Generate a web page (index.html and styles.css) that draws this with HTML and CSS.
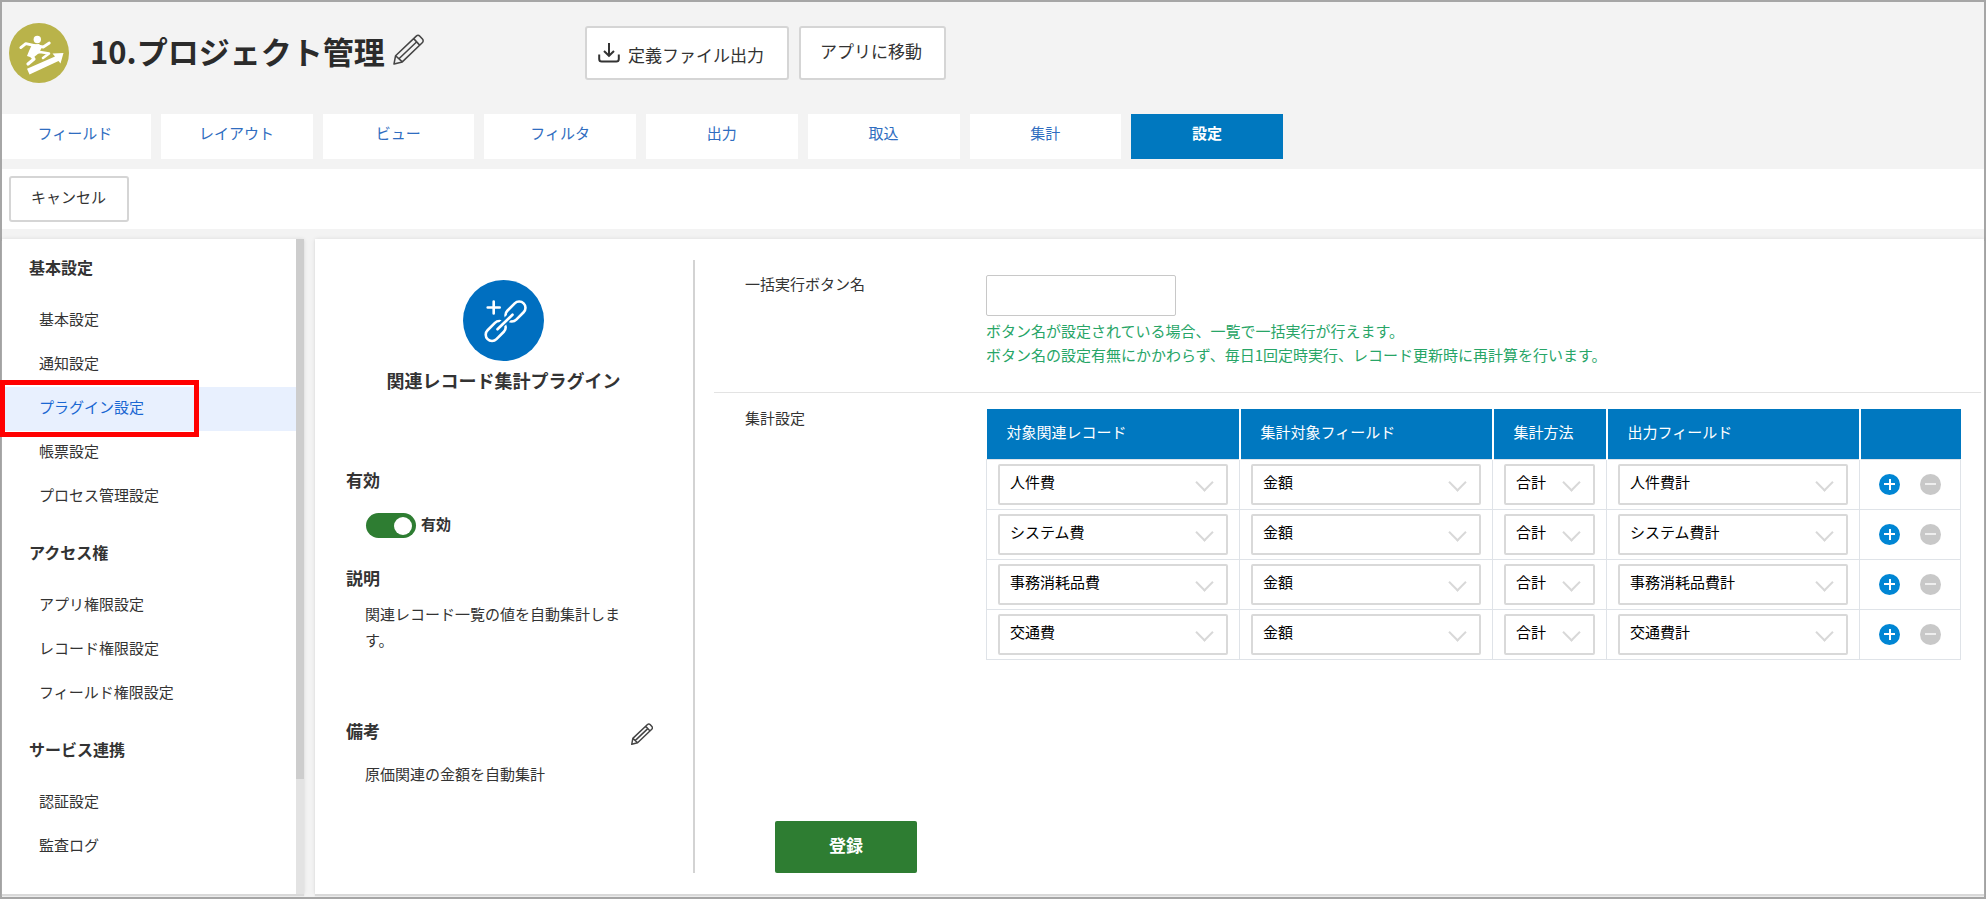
FILE: index.html
```html
<!DOCTYPE html>
<html lang="ja">
  <head>
    <meta charset="utf-8" />
    <title>10.プロジェクト管理</title>
    <link rel="stylesheet" href="styles.css">
  </head>

  <body>
    <div class="page">
      <header class="header">
        <svg class="app-icon" viewBox="0 0 60 60" aria-hidden="true">
          <circle cx="30" cy="30" r="30" fill="#b9b34a" />
          <circle cx="28.3" cy="16.5" r="3.7" fill="#fff" />
          <path d="M23 21.5l7-.5 3 3-3 6-6 5-6-2 2-5z" fill="#fff" />
          <path d="M11.8 24.6l5-4 9 2 8.5 1.4 6-4" fill="none" stroke="#fff" stroke-width="2.8" stroke-linecap="round" stroke-linejoin="round" />
          <path d="M22 30.500l9-1.500 9 1.500-6 4.500" fill="none" stroke="#fff" stroke-width="2.600" stroke-linecap="round" stroke-linejoin="round" />
          <path d="M21 31l4 5-6 5" fill="none" stroke="#fff" stroke-width="3.200" stroke-linecap="round" stroke-linejoin="round" />
          <path d="M18 45.800L46 33.400l-2.500-3L54.500 30l-3 10.500-2-2.500L20.500 51.500z" fill="#fff" />
        </svg>

        <div class="app-title">
          <h1>10.プロジェクト管理</h1>
          <button type="button" class="icon-button" aria-label="名称を編集">
            <svg class="pencil-large" viewBox="0 0 30 30">
              <path d="M1 29l1.500-8L22.500 2a2.500 2.500 0 0 1 3.500.2l2.500 2.700a2.500 2.500 0 0 1-.2 3.600L9 27zM2.500 21L9 27M20 4.500l6 6.500M6 23.700L22.500 8" />
            </svg>
          </button>
        </div>

        <div class="header-buttons">
          <button type="button" class="button export">
            <svg class="download" viewBox="0 0 22 20">
              <path d="M1.200 11.500v4.500a2.500 2.500 0 0 0 2.500 2.500h14.600a2.500 2.500 0 0 0 2.500-2.500v-4.500M11 0v12.500M6 8l5 4.800L16 8" />
            </svg>
            <span>定義ファイル出力</span>
          </button>
          <button type="button" class="button move">アプリに移動</button>
        </div>
      </header>

      <nav class="tabs-wrap">
        <div class="tabs">
          <a href="#">フィールド</a>
          <a href="#">レイアウト</a>
          <a href="#">ビュー</a>
          <a href="#">フィルタ</a>
          <a href="#">出力</a>
          <a href="#">取込</a>
          <a href="#">集計</a>
          <a href="#" class="active">設定</a>
        </div>
      </nav>

      <div class="toolbar">
        <button type="button" class="button cancel">キャンセル</button>
      </div>

      <div class="content">
        <aside class="sidebar">
          <nav class="menu">
            <section>
              <h2>基本設定</h2>
              <a href="#">基本設定</a>
              <a href="#">通知設定</a>
              <a href="#" class="selected">プラグイン設定</a>
              <a href="#">帳票設定</a>
              <a href="#">プロセス管理設定</a>
            </section>
            <section>
              <h2>アクセス権</h2>
              <a href="#">アプリ権限設定</a>
              <a href="#">レコード権限設定</a>
              <a href="#">フィールド権限設定</a>
            </section>
            <section>
              <h2>サービス連携</h2>
              <a href="#">認証設定</a>
              <a href="#">監査ログ</a>
            </section>
          </nav>
          <div class="scrollbar"><div class="thumb"></div></div>
        </aside>

        <main class="card">
          <section class="plugin">
            <div class="plugin-head">
              <svg class="plugin-icon" viewBox="0 0 81 81" aria-hidden="true">
                <circle cx="40.500" cy="40.500" r="40.500" fill="#006fc0" />
                <g fill="none" stroke="#fff" stroke-width="2.600" stroke-linecap="round">
                  <path d="M30.700 21.500v12M24.700 27.500h12" />
                  <rect x="-11.500" y="-6.300" width="23" height="12.600" rx="6.300" transform="translate(52.500 31.500) rotate(-45)" />
                  <rect x="-11.500" y="-6.300" width="23" height="12.600" rx="6.300" transform="translate(32.700 51) rotate(-45)" />
                  <path d="M37.500 45.500l9-8.500" stroke="#006fc0" stroke-width="6.500" />
                  <path d="M34.500 49.300l15-14.600" />
                </g>
              </svg>
              <p class="plugin-name">関連レコード集計プラグイン</p>
            </div>

            <h3>有効</h3>
            <label class="switch">
              <input type="checkbox" checked>
              <span>有効</span>
            </label>

            <h3>説明</h3>
            <p class="description">関連レコード一覧の値を自動集計します。</p>

            <div class="memo-head">
              <h3>備考</h3>
              <button type="button" class="icon-button" aria-label="備考を編集">
                <svg class="pencil-small" viewBox="0 0 30 30">
                  <path d="M1 29l1.500-8L22.500 2a2.500 2.500 0 0 1 3.500.2l2.500 2.700a2.500 2.500 0 0 1-.2 3.600L9 27zM2.500 21L9 27M20 4.500l6 6.500M6 23.700L22.500 8" />
                </svg>
              </button>
            </div>
            <p class="memo">原価関連の金額を自動集計</p>
          </section>

          <form class="settings">
            <div class="form-row">
              <label class="form-label" for="buttonName">一括実行ボタン名</label>
              <div class="form-field">
                <input type="text" id="buttonName" class="text-input">
                <p class="help">ボタン名が設定されている場合、一覧で一括実行が行えます。<br>ボタン名の設定有無にかかわらず、毎日1回定時実行、レコード更新時に再計算を行います。</p>
              </div>
            </div>

            <div class="form-row">
              <div class="form-label">集計設定</div>
              <div class="form-field">
                <table>
                  <colgroup>
                    <col>
                    <col>
                    <col class="col-method">
                    <col>
                    <col class="col-actions">
                  </colgroup>
                  <thead>
                    <tr>
                      <th>対象関連レコード</th>
                      <th>集計対象フィールド</th>
                      <th>集計方法</th>
                      <th>出力フィールド</th>
                      <th></th>
                    </tr>
                  </thead>
                  <tbody>
                    <tr>
                      <td><div class="select"><select aria-label="対象関連レコード"><option>人件費</option></select></div></td>
                      <td><div class="select"><select aria-label="集計対象フィールド"><option>金額</option></select></div></td>
                      <td><div class="select"><select aria-label="集計方法"><option>合計</option></select></div></td>
                      <td><div class="select"><select aria-label="出力フィールド"><option>人件費計</option></select></div></td>
                      <td>
                        <div class="actions">
                          <button type="button" class="round add" aria-label="行を追加"></button>
                          <button type="button" class="round remove" aria-label="行を削除"></button>
                        </div>
                      </td>
                    </tr>
                    <tr>
                      <td><div class="select"><select aria-label="対象関連レコード"><option>システム費</option></select></div></td>
                      <td><div class="select"><select aria-label="集計対象フィールド"><option>金額</option></select></div></td>
                      <td><div class="select"><select aria-label="集計方法"><option>合計</option></select></div></td>
                      <td><div class="select"><select aria-label="出力フィールド"><option>システム費計</option></select></div></td>
                      <td>
                        <div class="actions">
                          <button type="button" class="round add" aria-label="行を追加"></button>
                          <button type="button" class="round remove" aria-label="行を削除"></button>
                        </div>
                      </td>
                    </tr>
                    <tr>
                      <td><div class="select"><select aria-label="対象関連レコード"><option>事務消耗品費</option></select></div></td>
                      <td><div class="select"><select aria-label="集計対象フィールド"><option>金額</option></select></div></td>
                      <td><div class="select"><select aria-label="集計方法"><option>合計</option></select></div></td>
                      <td><div class="select"><select aria-label="出力フィールド"><option>事務消耗品費計</option></select></div></td>
                      <td>
                        <div class="actions">
                          <button type="button" class="round add" aria-label="行を追加"></button>
                          <button type="button" class="round remove" aria-label="行を削除"></button>
                        </div>
                      </td>
                    </tr>
                    <tr>
                      <td><div class="select"><select aria-label="対象関連レコード"><option>交通費</option></select></div></td>
                      <td><div class="select"><select aria-label="集計対象フィールド"><option>金額</option></select></div></td>
                      <td><div class="select"><select aria-label="集計方法"><option>合計</option></select></div></td>
                      <td><div class="select"><select aria-label="出力フィールド"><option>交通費計</option></select></div></td>
                      <td>
                        <div class="actions">
                          <button type="button" class="round add" aria-label="行を追加"></button>
                          <button type="button" class="round remove" aria-label="行を削除"></button>
                        </div>
                      </td>
                    </tr>
                  </tbody>
                </table>
              </div>
            </div>

            <button type="button" class="submit">登録</button>
          </form>
        </main>
      </div>
    </div>
  </body>
</html>
```

FILE: styles.css
```css
*, *::before, *::after {
  box-sizing: border-box;
}

body {
  margin: 0;
  font-family: "Noto Sans CJK JP", sans-serif;
  font-size: 15px;
  line-height: 24px;
  color: #333;
}

h1, h2, h3, p {
  margin: 0;
}

a {
  text-decoration: none;
}

button, input, select {
  font-family: inherit;
  font-size: 15px;
}

.page {
  display: flex;
  flex-direction: column;
  min-height: 100vh;
  border: 2px solid #a6a6a6;
  background-color: #f3f3f3;
}

/* header */

.header {
  display: flex;
  align-items: center;
  padding: 21px 7px 31px;
}

.app-icon {
  width: 60px;
  height: 60px;
  margin-right: 21px;
}

.app-title {
  display: flex;
  align-items: center;
  gap: 8px;
  flex: 0 0 495px;
  padding-bottom: 4px;
}

h1 {
  font-size: 31px;
  line-height: 44px;
  color: #2b2b2b;
}

.icon-button {
  display: flex;
  padding: 0;
  border: none;
  background: none;
}

.pencil-large {
  width: 31px;
  height: 31px;
  margin-bottom: 4px;
  fill: none;
  stroke: #444;
  stroke-width: 1.5;
  stroke-linejoin: round;
}

.header-buttons {
  display: flex;
  gap: 10px;
}

.button {
  border: 2px solid #d5d5d5;
  border-radius: 3px;
  background-color: white;
  color: #333;
}

.header-buttons .button {
  height: 54px;
  font-size: 17px;
}

.export {
  display: flex;
  align-items: center;
  gap: 8px;
  padding: 3px 23px 0 11px;
}

.move {
  padding: 0 22px 5px 19px;
}

.download {
  width: 22px;
  height: 20px;
  margin-bottom: 4px;
  fill: none;
  stroke: #333;
  stroke-width: 2;
}

/* tabs */

.tabs-wrap {
  overflow: hidden;
}

.tabs {
  display: grid;
  grid-template-columns: repeat(8, 1fr);
  gap: 10px;
  width: 1284px;
  margin-left: -3px;
}

.tabs a {
  height: 45px;
  padding-top: 7px;
  background-color: white;
  color: #2f6dc0;
  text-align: center;
}

.tabs .active {
  background-color: #0078bf;
  color: white;
  font-weight: bold;
}

.toolbar {
  margin: 10px 0;
  padding: 7px;
  background-color: white;
}

.cancel {
  display: block;
  height: 46px;
  padding: 0 21px 6px 20px;
}

/* content */

.content {
  display: flex;
  flex: 1;
  gap: 11px;
  padding-bottom: 3px;
}

.sidebar {
  display: flex;
  flex: 0 0 302px;
  background-color: white;
  box-shadow: 0 2px 1px #d9d9d9, 0 0 4px rgba(0, 0, 0, 0.1);
}

.menu {
  display: flex;
  flex-direction: column;
  flex: 1;
  gap: 5px;
}

.menu h2 {
  padding: 0 0 3px 27px;
  font-size: 16px;
  line-height: 57px;
}

.menu a {
  display: block;
  padding: 0 0 4px 37px;
  line-height: 40px;
  color: #333;
}

.menu .selected {
  position: relative;
  background-color: #e8f0fe;
  color: #1a67d2;
}

/* red frame round the selected entry */
.menu .selected::after {
  content: "";
  position: absolute;
  left: -2px;
  top: -7px;
  width: 199px;
  height: 57px;
  border: 5px solid #f00;
}

.scrollbar {
  width: 8px;
  background-color: #e3e3e3;
}

.thumb {
  height: 540px;
  background-color: #cdcdcd;
}

.card {
  display: flex;
  flex: 1;
  padding: 21px 0;
  background-color: white;
  box-shadow: 0 2px 1px #d9d9d9, 0 0 4px rgba(0, 0, 0, 0.1);
}

/* plugin column */

.plugin {
  flex: 0 0 380px;
  padding: 20px 40px 0 31px;
  border-right: 2px solid #d3d3d3;
}

.plugin-head {
  display: flex;
  flex-direction: column;
  align-items: center;
  gap: 6px;
  margin-left: 8px;
  margin-bottom: 75px;
}

.plugin-icon {
  width: 81px;
  height: 81px;
}

.plugin-name {
  font-size: 18px;
  line-height: 26px;
  font-weight: bold;
  white-space: nowrap;
}

.plugin h3 {
  font-size: 17px;
  line-height: 24px;
}

.switch {
  display: flex;
  align-items: center;
  gap: 5px;
  margin: 20px 0 27px 20px;
  font-weight: bold;
}

.switch span {
  padding-bottom: 3px;
}

.switch input {
  appearance: none;
  display: flex;
  justify-content: flex-end;
  align-items: center;
  width: 50px;
  height: 25px;
  margin: 0;
  padding: 0 4px;
  border-radius: 13px;
  background-color: #2e7d32;
}

.switch input::before {
  content: "";
  width: 18px;
  height: 18px;
  border-radius: 50%;
  background-color: white;
}

.description {
  margin: 11px 0 66px;
  padding-left: 19px;
  padding-right: 20px;
  line-height: 26px;
}

.memo-head {
  display: flex;
  align-items: flex-start;
  justify-content: space-between;
}

.pencil-small {
  width: 22px;
  height: 22px;
  margin-top: 4px;
  fill: none;
  stroke: #444;
  stroke-width: 2;
  stroke-linejoin: round;
}

.memo {
  margin-top: 17px;
  padding-left: 19px;
}

/* settings form */

.settings {
  flex: 1;
  display: flex;
  flex-direction: column;
  align-items: stretch;
  padding: 0 3px 0 19px;
}

.form-row {
  display: flex;
  padding: 15px 20px 25px 31px;
}

.form-row + .form-row {
  padding-top: 16px;
  border-top: 1px solid #e3e3e3;
}

.form-label {
  flex: 0 0 241px;
  margin-top: -3px;
}

.form-field {
  flex: 1;
}

.text-input {
  display: block;
  width: 190px;
  height: 41px;
  padding: 0 10px;
  border: 1px solid #c8c8c8;
  border-radius: 2px;
}

.help {
  margin-top: 3px;
  color: #27a567;
}

table {
  width: 100%;
  table-layout: fixed;
  border-collapse: collapse;
}

.col-method {
  width: 114px;
}

.col-actions {
  width: 101px;
}

th {
  height: 50px;
  padding: 0 0 4px 20px;
  border-right: 2px solid white;
  background-color: #0078c0;
  color: white;
  font-weight: normal;
  text-align: left;
}

th:last-child {
  border-right: none;
}

td {
  padding: 4px 11px;
  border: 1px solid #dfe3e8;
}

.select {
  position: relative;
}

/* chevron */
.select::after {
  content: "";
  position: absolute;
  right: 17px;
  top: 12px;
  width: 13px;
  height: 13px;
  border: solid #d8d8d8;
  border-width: 0 2px 2px 0;
  transform: rotate(45deg);
  pointer-events: none;
}

select {
  appearance: none;
  display: block;
  width: 100%;
  height: 41px;
  padding: 0 10px 6px;
  border: 2px solid #d9d9d9;
  border-radius: 2px;
  background-color: white;
  color: black;
}

.actions {
  display: flex;
  gap: 20px;
  padding-left: 8px;
}

.round {
  width: 21px;
  height: 21px;
  padding: 0;
  border: none;
  border-radius: 50%;
}

.add {
  background:
    linear-gradient(white, white) center / 11px 2px no-repeat,
    linear-gradient(white, white) center / 2px 11px no-repeat,
    #0086d4;
}

.remove {
  background: linear-gradient(#eee, #eee) center / 11px 2px no-repeat, #c8c8c8;
}

.submit {
  align-self: flex-start;
  width: 142px;
  height: 52px;
  margin-top: auto;
  margin-left: 61px;
  padding-bottom: 6px;
  border: none;
  border-radius: 2px;
  background-color: #2e7d32;
  color: white;
  font-size: 17px;
  font-weight: bold;
}
```
